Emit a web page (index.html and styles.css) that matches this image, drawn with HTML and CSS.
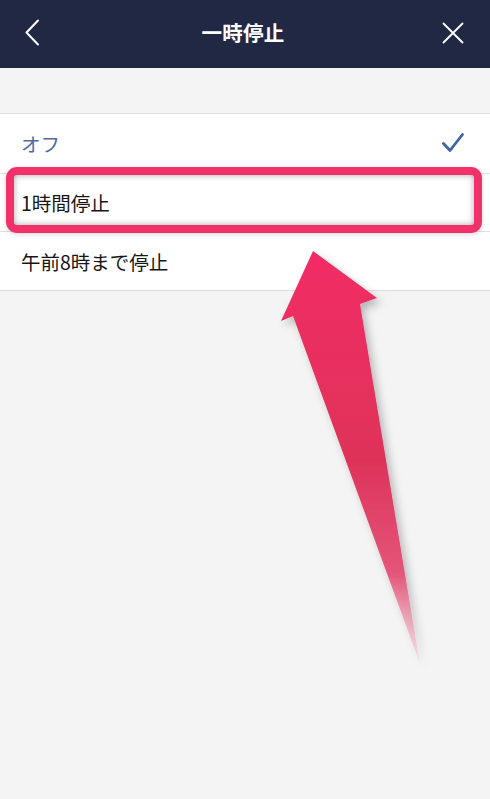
FILE: index.html
```html
<!DOCTYPE html>
<html lang="ja">
<head>
<meta charset="utf-8">
<link rel="stylesheet" href="styles.css">
</head>
<body>
<div class="screen">
  <header class="nav">
    <svg class="nav-back" width="16" height="27" viewBox="0 0 16 27"><path d="M14 1.5 L2.5 13.5 L14 25.5" fill="none" stroke="#fff" stroke-width="2" stroke-linecap="round" stroke-linejoin="round"/></svg>
    <h1 class="nav-title">一時停止</h1>
    <svg class="nav-close" width="22" height="22" viewBox="0 0 22 22"><path d="M1.5 1.5 L20.5 20.5 M20.5 1.5 L1.5 20.5" fill="none" stroke="#fff" stroke-width="1.8" stroke-linecap="round"/></svg>
  </header>
  <div class="spacer"></div>
  <ul class="list">
    <li class="row row-selected"><span>オフ</span>
      <svg class="check" width="22" height="20" viewBox="0 0 22 20"><path d="M1.5 10.5 L8 17.5 L20.5 1.5" fill="none" stroke="#3f64a6" stroke-width="2.8" stroke-linecap="round" stroke-linejoin="round"/></svg>
    </li>
    <li class="row"><span>1時間停止</span></li>
    <li class="row"><span>午前8時まで停止</span></li>
  </ul>
  <div class="highlight"></div>
  <svg class="arrow" width="490" height="799" viewBox="0 0 490 799">
    <defs>
      <linearGradient id="ag" x1="0" y1="251" x2="0" y2="665" gradientUnits="userSpaceOnUse">
        <stop offset="0" stop-color="#f22c66"/>
        <stop offset="0.5" stop-color="#de3259"/>
        <stop offset="0.78" stop-color="#e44f75" stop-opacity="0.95"/>
        <stop offset="1" stop-color="#f3b6c6" stop-opacity="0.3"/>
      </linearGradient>
      <filter id="as" x="-30%" y="-10%" width="160%" height="130%">
        <feDropShadow dx="4" dy="5" stdDeviation="4" flood-color="#000" flood-opacity="0.25"/>
      </filter>
    </defs>
    <polygon points="313,251 377,298 360,304 420,664 293,316 281,321" fill="url(#ag)" filter="url(#as)"/>
  </svg>
</div>
</body>
</html>
```
FILE: styles.css
```css
* { box-sizing: border-box; }
html, body { margin: 0; padding: 0; }
body {
  width: 490px;
  height: 799px;
  overflow: hidden;
  background: #f5f4f4;
  font-family: "Noto Sans CJK JP", "Noto Sans", sans-serif;
}
.screen {
  position: relative;
  width: 490px;
  height: 799px;
  background: #f5f4f4;
}
.nav {
  height: 68px;
  background: #202844;
  display: flex;
  align-items: center;
  justify-content: space-between;
  padding: 0 26px 0 24px;
}
.nav-back { margin-top: -3px; }
.nav-close { margin-top: -2px; }
.nav-title {
  margin: 0;
  color: #fff;
  font-size: 20.5px;
  font-weight: 700;
  letter-spacing: 0.3px;
  margin-top: -4px;
  margin-left: 4px;
}
.spacer { height: 45px; }
.list {
  list-style: none;
  margin: 0;
  padding: 0;
  background: #fff;
  border-top: 1px solid #dcdcdc;
  border-bottom: 1px solid #dcdcdc;
}
.row {
  height: 58.7px;
  display: flex;
  align-items: center;
  justify-content: space-between;
  padding: 0 26px 0 21px;
  font-size: 19.5px;
  color: #161616;
  border-top: 1px solid #e0e0e0;
}
.row:first-child { border-top: none; }
.row-selected { color: #4c6c9e; }
.highlight {
  position: absolute;
  left: 6px;
  top: 167px;
  width: 476px;
  height: 66px;
  border: 8.5px solid #f2306a;
  border-radius: 11px;
  box-shadow: inset 0 0 6px rgba(0,0,0,0.35), 0 1px 5px rgba(0,0,0,0.18);
}
.arrow {
  position: absolute;
  left: 0;
  top: 0;
  pointer-events: none;
}
```
